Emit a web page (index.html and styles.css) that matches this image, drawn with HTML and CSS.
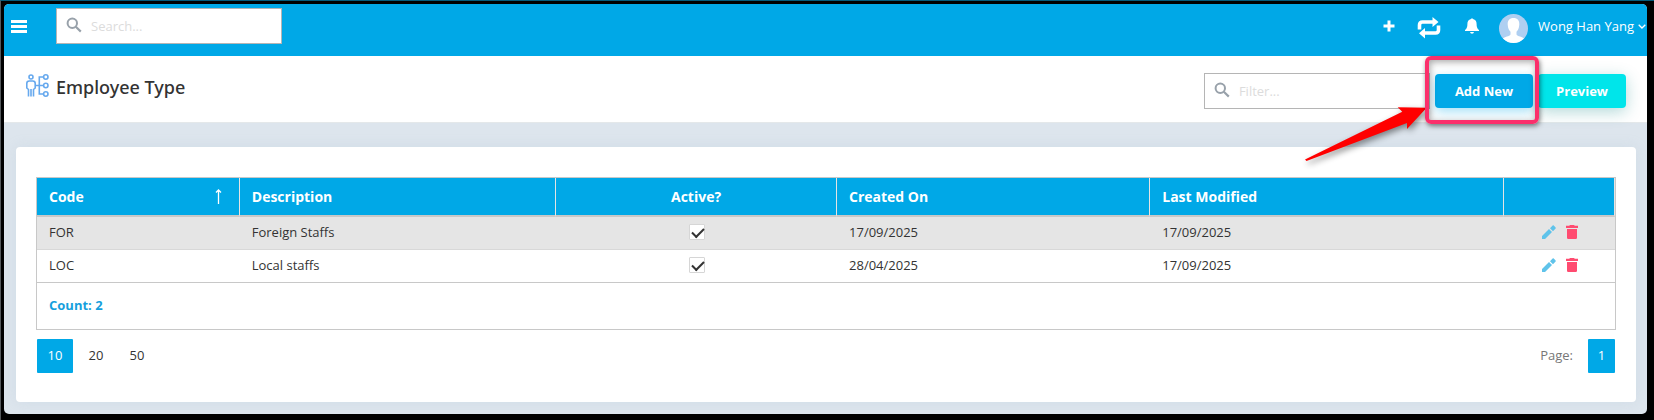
FILE: index.html
```html
<!DOCTYPE html>
<html lang="en">
<head>
<meta charset="utf-8">
<title>Employee Type</title>
<link rel="stylesheet" href="styles.css">
</head>
<body>
<svg class="symbols" aria-hidden="true">
  <symbol id="magnifier" viewBox="0 0 16 16"><circle cx="6.3" cy="6.3" r="4.7" fill="none" stroke="currentColor" stroke-width="2"/><path d="M9.8 9.8l5 4.8" stroke="currentColor" stroke-width="2.2"/></symbol>
  <symbol id="pencil" viewBox="0 0 14 14"><path d="M0 11v3h3l7-7-3-3zM8 3.200l3 3 2.600-2.600a1 1 0 0 0 0-1.200L11.800.4a1 1 0 0 0-1.200 0z" fill="currentColor"/></symbol>
  <symbol id="trash" viewBox="0 0 12 14"><path d="M4 0h4l.8.8H12V3H0V.8h3.200zM1 4h10v8.800A1.200 1.200 0 0 1 9.800 14H2.200A1.200 1.200 0 0 1 1 12.800z" fill="currentColor"/></symbol>
</svg>
<div class="app">
  <header class="topbar">
    <button class="icon-btn menu" aria-label="Menu"><svg width="16" height="13" viewBox="0 0 16 13"><path d="M0 1.500h16M0 6.500h16M0 11.500h16" stroke="#fff" stroke-width="3"/></svg></button>
    <label class="field"><svg width="16" height="16"><use href="#magnifier"/></svg><input type="text" placeholder="Search..." aria-label="Search"></label>
    <div class="tools">
      <button class="icon-btn add" aria-label="Add"><svg width="12" height="12" viewBox="0 0 12 12"><path d="M6 .5v11M.5 6h11" stroke="#fff" stroke-width="3"/></svg></button>
      <button class="icon-btn swap" aria-label="Switch"><svg width="24" height="22" viewBox="0 0 24 22"><g fill="none" stroke="#fff" stroke-width="3.600"><path d="M2.500 12.500V8q0-3 3-3H17"/><path d="M21.500 8.500V13q0 3-3 3H7"/></g><path d="M15.500 0L21.500 5l-6 5zM8 11L2 16.200 8 21.500z" fill="#fff"/></svg></button>
      <button class="icon-btn bell" aria-label="Notifications"><svg width="14" height="16" viewBox="0 0 14 16"><path d="M6 1q1-1.400 2 0c2.600.6 3.600 2.500 3.600 5 0 3 .6 4.600 2.400 6v1H0v-1c1.800-1.400 2.400-3 2.400-6C2.400 3.500 3.400 1.600 6 1zM5 14h4q-.3 1.700-2 1.700T5 14z" fill="#fff"/></svg></button>
      <button class="user"><svg class="avatar" width="29" height="29" viewBox="0 0 29 29"><clipPath id="disc"><circle cx="14.500" cy="14.500" r="14.500"/></clipPath><g clip-path="url(#disc)"><path d="M0 0h29v29H0z" fill="#afcff1"/><path d="M14.500 4c4 0 6 2.600 5.800 6.500-.2 3.500-1.300 5.800-2.800 7.300v2.700c1 2 6 2 8 4.500V29h-22v-4c2-2.500 7-2.500 8-4.500v-2.700c-1.500-1.500-2.600-3.800-2.800-7.300C8.500 6.600 10.500 4 14.500 4z" fill="#fff"/></g></svg><span>Wong Han Yang</span><svg class="caret" width="8" height="5" viewBox="0 0 8 5"><path d="M.7.7L4 4 7.300.7" fill="none" stroke="#fff" stroke-width="1.300"/></svg></button>
    </div>
  </header>
  <section class="page-head">
    <svg class="page-icon" width="23" height="23" viewBox="0 0 23 23" fill="none" stroke="#67a9ee" stroke-width="1.600"><circle cx="5" cy="3" r="2"/><path d="M2.500 22.500V15.500L.8 14V9.500Q.8 7 3.200 7h3.600Q9.200 7 9.200 9.500V14l-1.700 1.500V22.500M5 15v7.500M9.500 11.500h8M17.500 3h-4.200v17h4.200"/><circle cx="19.800" cy="3" r="2.200"/><circle cx="19.800" cy="11.500" r="2.200"/><circle cx="19.800" cy="20" r="2.200"/></svg>
    <h1>Employee Type</h1>
    <div class="actions">
      <label class="field"><svg width="16" height="16"><use href="#magnifier"/></svg><input type="text" placeholder="Filter..." aria-label="Filter"></label>
      <div class="callout">
        <button class="btn primary">Add New</button>
        <svg class="arrow" width="130" height="64" viewBox="0 0 130 64"><path d="M4 56.500L101.300 8.700 96.700 4.300l29 .4L106 26v-6L5.500 58z" fill="#f00"/></svg>
        <span class="frame"></span>
      </div>
      <button class="btn accent">Preview</button>
    </div>
  </section>
  <main class="card">
    <table>
      <colgroup><col class="c-code"><col class="c-desc"><col class="c-active"><col class="c-created"><col class="c-modified"><col class="c-tools"></colgroup>
      <thead>
        <tr><th><span class="sorted">Code<svg width="7" height="15" viewBox="0 0 7 15"><path d="M3.500 15V2M1 3.500L3.500 1 6 3.500" fill="none" stroke="#fff" stroke-width="1.300"/></svg></span></th><th>Description</th><th class="center">Active?</th><th>Created On</th><th>Last Modified</th><th></th></tr>
      </thead>
      <tbody>
        <tr><td>FOR</td><td>Foreign Staffs</td><td class="center"><input type="checkbox" checked aria-label="FOR active"></td><td>17/09/2025</td><td>17/09/2025</td><td><div class="row-tools"><button class="icon-btn edit" aria-label="Edit FOR"><svg width="14" height="14"><use href="#pencil"/></svg></button><button class="icon-btn remove" aria-label="Delete FOR"><svg width="12" height="14"><use href="#trash"/></svg></button></div></td></tr>
        <tr><td>LOC</td><td>Local staffs</td><td class="center"><input type="checkbox" checked aria-label="LOC active"></td><td>28/04/2025</td><td>17/09/2025</td><td><div class="row-tools"><button class="icon-btn edit" aria-label="Edit LOC"><svg width="14" height="14"><use href="#pencil"/></svg></button><button class="icon-btn remove" aria-label="Delete LOC"><svg width="12" height="14"><use href="#trash"/></svg></button></div></td></tr>
      </tbody>
      <tfoot><tr><td colspan="6">Count: 2</td></tr></tfoot>
    </table>
    <nav class="pager" aria-label="Pages">
      <button class="size current">10</button><button class="size">20</button><button class="size">50</button>
      <span class="page-label">Page:</span><button class="page current">1</button>
    </nav>
  </main>
</div>
</body>
</html>
```
FILE: styles.css
```css
* { box-sizing: border-box; }
body {
  margin: 0;
  min-height: 100vh;
  padding: 3px 7px 6px 3px;
  display: flex;
  background: #000;
  border-top: 1px solid #045b7c;
  border-left: 1px solid #55595c;
  font: 13px/18px "Open Sans", "Noto Sans", sans-serif;
  color: #333;
}
button, input { font: inherit; color: inherit; }
button { border: 0; background: none; padding: 0; cursor: pointer; }
svg { display: block; flex: none; }
.symbols { position: absolute; width: 0; height: 0; }
.app {
  flex: 1;
  display: flex;
  flex-direction: column;
  background: #dde5ed;
  border-radius: 5px;
  overflow: hidden;
}
.topbar {
  display: flex;
  align-items: center;
  height: 52px;
  padding: 0 1px 8px 7px;
  background: #00a8e7;
}
.menu { margin-right: 29px; }
.field {
  display: flex;
  align-items: center;
  gap: 9px;
  width: 226px;
  height: 36px;
  padding: 0 9px;
  border: 1px solid #b5b5b5;
  background: #fff;
}
.field svg { color: #98a1aa; margin-bottom: 2px; }
.field input { flex: 1; min-width: 0; border: 0; padding: 0; outline: 0; background: none; }
.field input::placeholder { color: #dcdcdc; opacity: 1; }
.tools { margin-left: auto; display: flex; align-items: center; color: #fff; }
.swap { margin: 4px 24px 0 22px; }
.bell { margin-right: 20px; }
.user { display: flex; align-items: center; }
.avatar { margin: 4px 10px 0 0; }
.caret { margin-left: 4px; }
.page-head {
  display: flex;
  align-items: center;
  min-height: 67px;
  padding: 4px 21px 0 22px;
  background: #fff;
  border-bottom: 1px solid #e4e8ea;
}
.page-icon { margin-bottom: 12px; }
h1 { margin: 0 0 8px 7px; font: 500 18px/24px "Noto Sans", "Open Sans", sans-serif; }
.actions { margin-left: auto; display: flex; align-items: center; gap: 5px; }
.btn { height: 34px; padding: 0 20px; border-radius: 4px; color: #fff; font-weight: 700; }
.primary { background: #00a8e7; box-shadow: 0 4px 12px rgba(0, 168, 231, .35); }
.accent { padding: 0 18px; background: #00e5ea; box-shadow: 0 4px 16px rgba(0, 130, 130, .3); }
.callout { position: relative; }
.frame {
  position: absolute;
  inset: -18px -6px -16px -10px;
  border: 4px solid #fb2f6b;
  border-radius: 6px;
  box-shadow: 1px 2px 5px rgba(0, 0, 0, .5), inset 1px 2px 7px rgba(0, 0, 0, .35);
  pointer-events: none;
}
.arrow {
  position: absolute;
  right: 102px;
  top: 29px;
  overflow: visible;
  filter: drop-shadow(2px 3px 3px rgba(0, 0, 0, .45));
  pointer-events: none;
}
.card {
  margin: 24px 11px 11px 12px;
  padding: 30px 20px 29px;
  background: #fff;
  border-radius: 4px;
  box-shadow: 0 0 14px rgba(150, 175, 200, .18);
}
table {
  width: 100%;
  table-layout: fixed;
  border-collapse: separate;
  border-spacing: 0;
  border: 1px solid #c8c8c8;
}
.c-code { width: 12.85%; }
.c-desc { width: 20.05%; }
.c-active { width: 17.8%; }
.c-created { width: 19.85%; }
.c-modified { width: 22.45%; }
.c-tools { width: 7%; }
th {
  height: 39px;
  padding: 0 12px;
  background: #00a8e7;
  border-right: 1px solid #e4e4e4;
  border-bottom: 2px solid #c8c8c8;
  color: #fff;
  font-size: 14px;
  text-align: left;
}
td { height: 33px; padding: 0 12px 2px; border-bottom: 1px solid #d8d8d8; }
tbody tr:first-child td { background: #e5e5e5; }
tbody tr:last-child td { border-color: #c8c8c8; }
.center { text-align: center; }
.sorted { display: flex; align-items: center; justify-content: space-between; padding-right: 5px; }
input[type="checkbox"] {
  appearance: none;
  display: block;
  width: 16px;
  height: 16px;
  margin: 0 auto;
  border: 1px solid #d6d6d6;
  border-radius: 1px;
  background: #fff;
}
input[type="checkbox"]:checked::before {
  content: "";
  display: block;
  width: 10px;
  height: 5px;
  margin: 3px 2px;
  border: solid #333;
  border-width: 0 0 2px 2px;
  transform: rotate(-45deg);
}
.row-tools { display: flex; align-items: center; justify-content: flex-end; gap: 10px; padding-right: 25px; }
.edit { color: #5fc3ea; }
.remove { color: #ff4b70; }
tfoot td { height: 46px; border: 0; color: #169fdd; font-weight: 700; }
.pager { display: flex; align-items: center; gap: 5px; padding: 9px 1px 0; }
.size, .page { height: 34px; padding-bottom: 2px; border-radius: 1px; }
.size { width: 36px; }
.page { width: 27px; }
.current { background: #00a8e7; color: #fff; }
.page-label { margin: 0 10px 2px auto; color: #777; }
```
